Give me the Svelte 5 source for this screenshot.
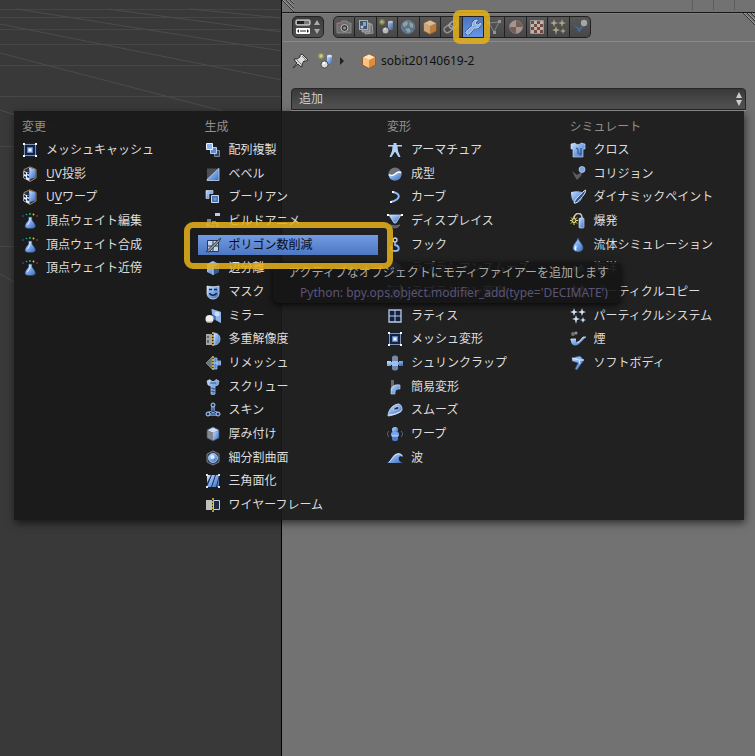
<script>
  let icons = {
    meshcache: '<path d="M1 1h14v14H1z" fill="#15233f"/><path d="M3 2.500h10M3 13.500h10M2.500 3v10M13.500 3v10" stroke="#7f93b5"/><path d="M5.500 5.500h5v5h-5z" fill="#a9c6ef" stroke="#5c84c4"/><path d="M7 7h2v2H7z" fill="#fff"/><path d="M1 1h2v2H1zM13 1h2v2h-2zM1 13h2v2H1zM13 13h2v2h-2z" fill="#fff"/>',
    uv: '<path d="M8 .8l6 2.700v8.500l-6 3.500-6-3.500V3.500z" fill="#22324e" stroke="#a9824f"/><path d="M7 1.500l6.500 2v8L8 13z" fill="url(#blue)"/><path d="M1.500 5l6 2v8l-6-3z" fill="#e8f0fc"/><path d="M2 6l2 .7v2L2 8zM5 9.300l2 .7v2l-2-.7zM2 10l2 .8v2l-2-.8zM5 6.500l2 .6v1.500l-2-.6z" fill="#1b3158"/>',
    weight: '<g><circle cx="1" cy="3" r=".8" fill="#2c61d8"/><circle cx="4.500" cy="1.500" r=".8" fill="#25b7a0"/><circle cx="8" cy="1" r=".9" fill="#37c63b"/><circle cx="11.500" cy="1.500" r=".9" fill="#ead23a"/><circle cx="15" cy="3" r=".8" fill="#e03b2b"/></g><path d="M6.500 4h3.500v3c1 1.500 4 4.500 3.300 7-.8 2-9.300 2-10.100 0C2.500 11.500 5.500 8.500 6.500 7z" fill="url(#blue)" stroke="#23406f" stroke-width=".6"/><path d="M8 5v3l-2.500 4" stroke="#e4f0ff" fill="none"/>',
    array: '<path d="M9.500 8.500h5v6h-5z" fill="#36435d" stroke="#7e8799"/><path d="M5.500 5.500h6v6h-6z" fill="#5e8bd0" stroke="#b7cdf0"/><path d="M1.500 1.500h6v6h-6z" fill="#8cb4ee" stroke="#e6f0ff"/>',
    bevel: '<path d="M2 2.500h12v12H2z" fill="#4b4e54"/><path d="M14 2.500v12H2v-1z" fill="url(#blue)"/><path d="M2 13.500L13.500 2.500H14v12H2z" fill="none" stroke="#bcd4f5" stroke-width=".8"/>',
    boolean: '<path d="M1 1.500h7v3H4v5H1z" fill="url(#blue)" stroke="#dbe9ff" stroke-width=".6"/><path d="M6.500 6.500h7v7h-7z" fill="#4a73b4" stroke="#c4dafa"/><path d="M8.500 8.500h3v3h-3z" fill="#6d97dc"/>',
    build: '<path d="M10 0h5v3h-5z" fill="#b4cff5"/><path d="M2 6h4v3H2zM7 8h4v3H7zM1 10h4v4H1zM6 12h3v2H6zM11 9h3v5h-3z" fill="#6d83a8"/>',
    decimate: '<path d="M2.500 3.500h11v11h-11z" fill="#c2d4ee" stroke="#273957"/><path d="M2 9h12M8 3v12M3 14L14 3" stroke="#273957"/><path d="M1 14.500L13 3l3-2-2 4L4 15z" fill="#8d8f93" stroke="#1c222c" stroke-width=".7"/>',
    edgesplit: '<path d="M8 1l6 3v8l-6 3-6-3V4z" fill="url(#blue)"/><path d="M8 8l6-4v8l-6 3z" fill="#355790"/><path d="M2 4l6 4v7" fill="none" stroke="#c4dafa"/>',
    mask: '<path d="M2 2c4 1 8 1 12 0v7c0 4-3 6-6 6s-6-2-6-6z" fill="url(#blue)" stroke="#e4efff" stroke-width=".7"/><path d="M4 5.500h3M9 5.500h3M4.500 9c1 3 6 3 7 0" stroke="#14284c" fill="none" stroke-width="1.500"/>',
    mirror: '<path d="M6 1l10 3v11l-8-4z" fill="#5178b4"/><path d="M7 1l9 3v11l-5-3V8L7 6z" fill="#8fb4ea"/><circle cx="12" cy="6" r="2.500" fill="#c9dcf8"/><circle cx="4.500" cy="11" r="4" fill="#eee"/><path d="M1 13c2 3 6 2 7 0-2 1-5 1-7 0" fill="#888"/>',
    multires: '<path d="M1 3h6v11H1z" fill="#a7a7a7"/><path d="M2 5h2v2H2zM2 9h2v3H2z" fill="#656565"/><path d="M9 2c8 0 8 12 0 12z" fill="url(#blue)" stroke="#d5e5fd" stroke-width=".6"/><path d="M8 1v15" stroke="#e9c733" stroke-width="1.500" stroke-dasharray="2 1"/>',
    remesh: '<path d="M7 2v12L1 8z" fill="#6d7178" stroke="#ababab" stroke-width=".6"/><path d="M9 3h3v3h4v4h-4v4H9z" fill="#5187dc" stroke="#b8d2f8" stroke-width=".7"/><path d="M9 8h7M12 6v4" stroke="#c9defc" stroke-width=".7"/><path d="M8 1v15" stroke="#e9c733" stroke-width="1.500" stroke-dasharray="2 1"/>',
    screw: '<path d="M2 2l3-1.500 2 2h2l2-2 3 1.500-1 4-3 1v8l-2 1-2-1V7L3 6z" fill="url(#blue)" stroke="#d5e5fd" stroke-width=".6"/><path d="M6 9l4 1M6 12l4 1M5 4h6" stroke="#315387"/>',
    skin: '<path d="M8 4v5L3.500 12h9L8 9" stroke="#7fa8e6" stroke-width="3.500" stroke-linejoin="round" fill="none"/><path d="M8 3v6l-5 3h10L8 9" stroke="#162b50" fill="none"/><g fill="#1d3768" stroke="#b6d0f7"><circle cx="8" cy="3" r="2"/><circle cx="3" cy="12" r="2"/><circle cx="13" cy="12" r="2"/></g>',
    solidify: '<path d="M2 4l6-3 6 3-6 3z" fill="#cfdef4"/><path d="M2 4l6 3v8l-6-3z" fill="#85898f"/><path d="M8 7l6-3v8l-6 3z" fill="url(#blue)"/><path d="M2 4l6-3 6 3v8l-6 3-6-3z" fill="none" stroke="#3a4a66" stroke-width=".7"/>',
    subsurf: '<path d="M8 1l6 3v8l-6 3-6-3V4z" fill="#31394a" stroke="#777d89"/><circle cx="8" cy="8" r="4.500" fill="url(#blue)" stroke="#9dbff2"/><circle cx="7.500" cy="7" r="2" fill="#e1eeff"/>',
    triangulate: '<path d="M2 2h12v12H2z" fill="#1b2e52"/><path d="M2 2h4L2 10zM7 2h3L6 14H2zM11 2h3L11 14H7zM14 5v9h-2z" fill="url(#blue)"/><path d="M1 1h2v2H1zM13 1h2v2h-2zM1 13h2v2H1zM13 13h2v2h-2z" fill="#d9e8ff"/>',
    wireframe: '<path d="M1 3h6v10H1z" fill="#bfbfbf"/><path d="M8.500 3.500h6v9h-6z" fill="#1d2a41" stroke="#bad0f2"/><path d="M8 1v15" stroke="#e9c733" stroke-width="1.500" stroke-dasharray="2 1"/>',
    armature: '<path d="M1 3h5.500V1h3v2H15v1.500h-4.500l.5 4.500 2.500 6h-2L8.300 10h-.6L4.500 15h-2L5 9l.5-4.500H1z" fill="#b4d0f6"/>',
    cast: '<circle cx="8" cy="8" r="6.500" fill="#6f7379"/><path d="M1.500 8c2 1.500 3.500 2 6 0s4-3 7-2c.5 5-2 8.500-6.500 8.500S1.500 11 1.500 8z" fill="url(#blue)"/><path d="M2 8.500c2 1.500 3.500 1.500 6-.5s4-2.500 6-1.500" stroke="#fff" fill="none" stroke-width="1.500"/>',
    curve: '<path d="M6 3c8 2 8 7-2 10" stroke="#93b8ef" stroke-width="2" fill="none"/><path d="M5 2h2v2H5zM3 12h2v2H3z" fill="#f3f8ff"/>',
    displace: '<path d="M2 2h12l-5 8H7z" fill="url(#blue)" stroke="#d8e7ff" stroke-width=".7"/><path d="M3 12l5 1 5-1-2 2-3 1-3-1z" stroke="#676b73" fill="#555"/><path d="M0 1h2v2H0zM14 1h2v2h-2z" fill="#fff"/>',
    hook: '<circle cx="8" cy="3" r="2" fill="none" stroke="#c5daf8" stroke-width="1.300"/><path d="M8 5v3c5 1 5 6 0 6-3 0-5-1-4-4l1 1" fill="none" stroke="#8bb3ef" stroke-width="1.800"/>',
    laplacian: '<circle cx="8" cy="8" r="6" fill="url(#blue)"/><path d="M3 9c3-4 6-4 9 0" stroke="#dce9fc" fill="none"/>',
    lattice: '<path d="M2 2h12v12H2z" fill="#13213d" stroke="#b8cbed" stroke-width="1.300"/><path d="M8 2v12M2 8h12" stroke="#b8cbed"/>',
    shrinkwrap: '<path d="M0 6h4v1h8V6h4v5h-4v-1H4v1H0z" fill="url(#blue)"/><path d="M5 2c1-2 5-2 6 0v12c-1 2-5 2-6 0z" fill="#6e86ab"/><path d="M5 6h6v5H5z" fill="#9bc0f5"/><path d="M6 2h4v3H6z" fill="#888"/>',
    simple: '<path d="M4 1h3v13H4z" fill="#66686b"/><path d="M4 15V10c1-3 4-5 9-4v4c-4 0-5 1-5 5z" fill="url(#blue)" stroke="#c6dcfa" stroke-width=".6"/>',
    smooth: '<path d="M1 14c0-4 3-11 10-12 3 0 4 3 4 6 0 2-7 5-14 6z" fill="url(#blue)" stroke="#d9e8ff" stroke-width=".8"/><path d="M6 8c2-4 6-4 6-2 0 1-2 2-6 2z" fill="#182641" stroke="#dceaff" stroke-width=".7"/><path d="M2 13c4 0 9-2 12-4" stroke="#dceaff"/>',
    warp: '<circle cx="8" cy="4" r="3" fill="url(#blue)"/><rect x="4" y="6" width="8" height="5" rx="2" fill="#79a7ef"/><rect x="5" y="10" width="6" height="5" rx="2" fill="#4d7dce"/><path d="M5 10h6" stroke="#d0e2fb"/><path d="M2 5c-2 2-2 4 0 6M14 5c2 2 2 4 0 6" fill="none" stroke="#54729e"/>',
    wave: '<path d="M0 13C4 12 5 4 11 3c3 0 5 2 5 4-3-2-5 0-4 3 1 2 2 2 4 3z" fill="url(#blue)"/><path d="M2 12C5 10 6 5 11 4c2 0 4 1 4 2" stroke="#d7e6fc" fill="none"/>',
    cloth: '<path d="M1 2l4-1c1 2 5 2 6 0l4 1v5h-2v8H3V7H1z" fill="url(#blue)" stroke="#d6e6fd" stroke-width=".6"/><path d="M6 6l2 1v5M11 6v6H9" stroke="#1e4580" fill="none"/>',
    collision: '<path d="M2 5l5 4 6-4-2 5-4 4-2-3z" fill="#5b5d61"/><circle cx="12" cy="3.500" r="3" fill="#7ea6e6" stroke="#c9dcfa" stroke-width=".7"/>',
    paint: '<path d="M1 3c5-1 7-1 11 0v5c0 4-4 6-6 6-4-1-5-6-5-11z" fill="url(#blue)"/><path d="M4 14c1-4 6-8 10-12l2-1c0 3-6 10-10 13z" fill="#2a528f" stroke="#e3efff"/>',
    explode: '<path d="M4 5c1-6 8-6 8 0" fill="none" stroke="#c7c7c7" stroke-width="1.500"/><rect x="9" y="5" width="5" height="10" rx="1" fill="url(#blue)" stroke="#dbe8fd" stroke-width=".6"/><path d="M4 3v9M0 7.500h8M1 4.500l6 6M7 4.500l-6 6" stroke="#e2d46a"/><circle cx="4" cy="7.500" r="2" fill="#4b471d" stroke="#efe798"/>',
    fluid: '<path d="M8 1c1 4 5 6 5 10 0 5-10 5-10 0 0-4 4-6 5-10z" fill="url(#blue)" stroke="#365e9b" stroke-width=".7"/><path d="M6 9c-1 2-1 3 0 4" stroke="#fff" fill="none" stroke-width="1.500"/>',
    ocean: '<path d="M1 10l4-5 3 3 3-4 4 6-7 3z" fill="url(#blue)"/>',
    particles: '<path d="M4 0l1 3 3 1-3 1-1 3-1-3-3-1 3-1zM12 0l1 3 3 1-3 1-1 3-1-3-3-1 3-1zM6 7l1 3 3 1-3 1-1 4-1-4-3-1 3-1zM13 9l.8 2.200L16 12l-2.200.8L13 15l-.8-2.200L10 12l2.200-.8z" fill="#cfe2f8"/>',
    smoke: '<circle cx="3" cy="3" r="2" fill="#6d7178"/><circle cx="6" cy="2" r="1.500" fill="#8e9299"/><path d="M0 8h6v3l3-1 4-4h3l-6 6c-3 4-9 3-9-2z" fill="url(#blue)"/><path d="M1 8h5M7 12l3-2 3-4h3" stroke="#e0ecff" stroke-width=".8"/>',
    softbody: '<path d="M2 3l8-2 4 4-3 4-4 6-2-1 3-6-6-2z" fill="url(#blue)" stroke="#2f5085" stroke-width=".6"/><path d="M2 3l7 2 5 0M9 5l1 4" fill="none" stroke="#dcebff"/>',

    camera: '<path d="M1 4h4l1-2h5l1 2h3v10H1z" fill="#777" stroke="#aaa" stroke-width=".8"/><circle cx="8.500" cy="9" r="3.500" fill="#333" stroke="#ddd"/><circle cx="8.500" cy="9" r="1.500" fill="#aaa"/><path d="M2 5h2v1H2z" fill="#c84630"/>',
    layers: '<path d="M7 6l7-1 1 9-8 1z" fill="#777" stroke="#bbb"/><path d="M4 4h8v9H4z" fill="#999" stroke="#ddd" stroke-width=".7"/><path d="M1 1h9v10H1z" fill="#ccc"/><path d="M2 2h7v8H2z" fill="#365684"/><path d="M5 3h3v4H5z" fill="#9abcec"/><circle cx="4" cy="8" r="1.500" fill="#eee"/>',
    scene: '<circle cx="3" cy="3" r="3" fill="#a39f55" opacity=".7"/><path d="M3 1v4M1 3h4" stroke="#f0eb9a" stroke-width=".8"/><path d="M9 3h5v8H9z" fill="url(#blue)"/><ellipse cx="11.500" cy="3" rx="2.500" ry="1.300" fill="#d4e5ff"/><circle cx="6.500" cy="11.500" r="3.500" fill="#ddd" stroke="#333" stroke-width=".8"/><circle cx="6" cy="10" r="1.300" fill="#fff"/>',
    world: '<circle cx="8" cy="8" r="6.500" fill="#5a7fae" stroke="#99adbd" stroke-width=".6"/><path d="M3 4l4-2 1 3-3 3-2-1zM9 3l4 2v4l-3-1zM5 10l4-1 2 3-3 2z" fill="#a4bdb5"/>',
    cube: '<path d="M1.500 4L8 1l6.500 3v8L8 15.500 1.500 12z" fill="#e08c3a"/><path d="M2 4l6-3 6 3-6 3z" fill="#ffe3bd"/><path d="M2 4l6 3v8l-6-3z" fill="#f8c286"/><path d="M1.500 4L8 1l6.500 3v8L8 15.500 1.500 12z" fill="none" stroke="#815124" stroke-width=".7"/>',
    constraint: '<rect x="1" y="7" width="9" height="6" rx="3" transform="rotate(-35 5 10)" fill="none" stroke="#aaa" stroke-width="1.500"/><rect x="6" y="3" width="9" height="6" rx="3" transform="rotate(-35 10 6)" fill="none" stroke="#c0c0c0" stroke-width="1.500"/>',
    wrench: '<path d="M1 12.500L7.500 7C6.500 3.500 9 .8 12.500 1L10.500 3.500l.5 2 2 .5L15.500 4c.5 3.500-2.500 6-6 5L4 15c-2 1.300-4-.8-3-2.500z" fill="#a8c8fa" stroke="#14284c" stroke-width="1.600" stroke-linejoin="round"/><path d="M1 12.500L7.500 7C6.500 3.500 9 .8 12.500 1L10.500 3.500l.5 2 2 .5L15.500 4c.5 3.500-2.500 6-6 5L4 15c-2 1.300-4-.8-3-2.500z" fill="#86aff0" stroke="#eef5ff" stroke-width=".8"/>',
    data: '<path d="M3 4l10-1-5 10z" fill="none" stroke="#999"/><path d="M1 2h3v3H1zM12 1h3v3h-3zM7 12h3v3H7z" fill="#aaa"/>',
    material: '<circle cx="8" cy="8" r="6.500" fill="#82635b" stroke="#b0a09c" stroke-width=".6"/><path d="M8 1.500A6.500 6.500 0 0 0 1.500 8H8zM8 8v6.500A6.500 6.500 0 0 0 14.500 8z" fill="#c1aca6"/>',
    texture: '<path d="M1.500 1.500h13v13h-13z" fill="#e5d5cf" stroke="#aaa"/><path d="M2 2h3v3H2zM8 2h3v3H8zM5 5h3v3H5zM11 5h3v3h-3zM2 8h3v3H2zM8 8h3v3H8zM5 11h3v3H5zM11 11h3v3h-3z" fill="#84483c"/>',
    sparkles: '<path d="M4 0l1 3 3 1-3 1-1 3-1-3-3-1 3-1zM12 0l1 3 3 1-3 1-1 3-1-3-3-1 3-1zM6 7l1 3 3 1-3 1-1 4-1-4-3-1 3-1zM13 9l.8 2.200L16 12l-2.200.8L13 15l-.8-2.200L10 12l2.200-.8z" fill="#c9c49b"/>',
    physics: '<path d="M1 5l6 4 6-4-3 5-3 4-2-4z" fill="#466ca8"/><circle cx="12" cy="4" r="3.200" fill="#bfc2c5"/>',
    pin: '<path d="M9 1l6 6-2 1-2 0-2 3 0 3-2-1-2-2-5 4 4-5-2-2-1-2h3l3-2 0-2z" fill="#ddd" stroke="#222" stroke-width=".9"/><path d="M9 3l4 4M4 7l5 5" stroke="#777"/>'
  }

  let tabs = ['camera', 'layers', 'scene', 'world', 'cube', 'constraint', 'wrench', 'data', 'material', 'texture', 'sparkles', 'physics']
  let activeTab = $state('wrench')
  let selected = $state('decimate')

  let groups = [
    {
      title: '変更',
      items: [
        ['meshcache', 'メッシュキャッシュ'],
        ['uv', '投影', '', 'U', 'V'],
        ['uv', 'ワープ', 'U', 'V', ''],
        ['weight', '頂点ウェイト編集'],
        ['weight', '頂点ウェイト合成'],
        ['weight', '頂点ウェイト近傍']
      ]
    },
    {
      title: '生成',
      items: [
        ['array', '配列複製'],
        ['bevel', 'ベベル'],
        ['boolean', 'ブーリアン'],
        ['build', 'ビルドアニメ'],
        ['decimate', 'ポリゴン数削減'],
        ['edgesplit', '辺分離'],
        ['mask', 'マスク'],
        ['mirror', 'ミラー'],
        ['multires', '多重解像度'],
        ['remesh', 'リメッシュ'],
        ['screw', 'スクリュー'],
        ['skin', 'スキン'],
        ['solidify', '厚み付け'],
        ['subsurf', '細分割曲面'],
        ['triangulate', '三角面化'],
        ['wireframe', 'ワイヤーフレーム']
      ]
    },
    {
      title: '変形',
      items: [
        ['armature', 'アーマチュア'],
        ['cast', '成型'],
        ['curve', 'カーブ'],
        ['displace', 'ディスプレイス'],
        ['hook', 'フック'],
        ['laplacian', 'ラプラシアンスムーズ'],
        ['meshcache', 'ラプラシアン変形'],
        ['lattice', 'ラティス'],
        ['meshcache', 'メッシュ変形'],
        ['shrinkwrap', 'シュリンクラップ'],
        ['simple', '簡易変形'],
        ['smooth', 'スムーズ'],
        ['warp', 'ワープ'],
        ['wave', '波']
      ]
    },
    {
      title: 'シミュレート',
      items: [
        ['cloth', 'クロス'],
        ['collision', 'コリジョン'],
        ['paint', 'ダイナミックペイント'],
        ['explode', '爆発'],
        ['fluid', '流体シミュレーション'],
        ['ocean', '海洋'],
        ['particles', 'パーティクルコピー'],
        ['particles', 'パーティクルシステム'],
        ['smoke', '煙'],
        ['softbody', 'ソフトボディ']
      ]
    }
  ]
</script>

{#snippet icon(name)}
  <svg class="icon" viewBox="0 0 16 16" fill="none" aria-hidden="true">{@html icons[name]}</svg>
{/snippet}

{#snippet grip()}
  <svg class="grip" viewBox="0 0 12 12" aria-hidden="true">
    <path d="M0 0l12 12M4 0l8 8M8 0l4 4" stroke="#333" />
    <path d="M1 0l11 11M5 0l7 7M9 0l3 3" stroke="#aaa" stroke-width=".7" />
  </svg>
{/snippet}

<svg width="0" height="0" class="defs" aria-hidden="true">
  <linearGradient id="blue" x1="0" y1="0" x2="1" y2="1">
    <stop offset="0" stop-color="#cde1fc" />
    <stop offset=".5" stop-color="#7ba7e8" />
    <stop offset="1" stop-color="#3c68b2" />
  </linearGradient>
</svg>

<div class="window">
  <section class="viewport" aria-label="3D View">
    <svg viewBox="0 0 282 756" preserveAspectRatio="xMinYMin slice" fill="none" aria-hidden="true">
      <path stroke="#464646" d="M0 9.500h282M0 17.500h282M0 29.500h282M0 44.500h282M0 65.500h282M0 96.500h282M0 146.500h282M0 246.500h282" />
      <path stroke="#4c4c4c" d="M17 9l265 42M108 9l174 23M190 9l92 9M0 24l282 56M0 53l223 58M0 110l60 20M0 274l60 34" />
      <path stroke="#682528" d="M0 521.500h282" />
    </svg>
  </section>

  <main class="properties">
    <div class="strip">
      {@render grip()}
      <div class="ticks"><i></i><i></i><i></i></div>
    </div>
    <header>
      <button class="editor" aria-label="Editor type">
        <svg viewBox="0 0 28 18" aria-hidden="true">
          <rect x="2" y="2" width="14" height="5" rx="1" fill="#777" stroke="#eee" />
          <path d="M3 3h7v3H3z" fill="#222" />
          <rect x="2" y="10" width="14" height="6" rx="1" fill="#fff" />
          <path d="M3 13l2-2v4zM15 13l-2-2v4zM6 12.500h6v1H6z" fill="#222" />
          <path d="M20 7l3-5 3 5zM20 11l3 5 3-5z" fill="#aaa" />
        </svg>
      </button>
      <div class="tabs">
        {#each tabs as tab}
          <button class="tab" class:active={tab === activeTab} aria-label={tab} onclick={() => activeTab = tab}>
            {@render icon(tab)}
            {#if tab === activeTab}<span class="marker"></span>{/if}
          </button>
        {/each}
      </div>
      {@render grip()}
    </header>
    <div class="context">
      {@render icon('pin')}
      {@render icon('scene')}
      <svg class="arrow" viewBox="0 0 4 8" aria-hidden="true"><path d="M0 0l4 4-4 4z" fill="#222" /></svg>
      {@render icon('cube')}
      <span>sobit20140619-2</span>
    </div>
    <button class="add" aria-haspopup="menu" aria-expanded="true">
      追加
      <svg viewBox="0 0 6 14" aria-hidden="true"><path d="M0 6l3-6 3 6zM0 8l3 6 3-6z" fill="#ccc" /></svg>
    </button>
  </main>

  <div class="menu">
    {#each groups as group}
      <section class="group">
        <h2>{group.title}</h2>
        <ul>
          {#each group.items as [name, label, before, key, after]}
            <li>
              <button class="item" class:selected={name === selected} onclick={() => selected = name}>
                {@render icon(name)}
                <span>{before}{#if key}<u>{key}</u>{/if}{after}{label}</span>
              </button>
              {#if name === 'decimate'}<span class="marker"></span>{/if}
            </li>
          {/each}
        </ul>
      </section>
    {/each}
    <div class="tooltip" role="tooltip">
      <p>アクティブなオブジェクトにモディファイアーを追加します</p>
      <p class="python">Python: bpy.ops.object.modifier_add(type='DECIMATE')</p>
    </div>
  </div>
</div>

<style>
  :global(body) {
    margin: 0;
    background: #727272;
  }
  .defs {
    position: absolute;
  }
  .window {
    position: relative;
    display: flex;
    min-height: 100vh;
    font: 12px/20px "Noto Sans", "Noto Sans CJK JP", sans-serif;
    color: #ddd;
  }
  button {
    font: inherit;
    color: inherit;
    margin: 0;
    padding: 0;
    border: 0;
    background: none;
    box-sizing: border-box;
  }
  .icon {
    display: block;
    flex: none;
    width: 16px;
    height: 16px;
  }

  .viewport {
    flex: 281 1 0;
    position: relative;
    overflow: hidden;
    background: #393939;
    border-right: 1px solid #000;
  }
    .viewport svg {
      position: absolute;
      width: 100%;
      height: 100%;
    }

  .properties {
    flex: 473 1 0;
    background: #727272;
  }
    .grip {
      display: block;
      flex: none;
      width: 12px;
      height: 12px;
    }
    .strip {
      display: flex;
      justify-content: space-between;
      height: 12px;
      border-bottom: 1px solid #161616;
    }
      .ticks {
        display: flex;
        gap: 20px;
        padding-right: 20px;
      }
        .ticks i {
          width: 1px;
          height: 10px;
          background: #5c5c5c;
        }
    header {
      display: flex;
      align-items: center;
      height: 28px;
      padding-left: 10px;
      border-bottom: 1px solid #8a8a8a;
      box-shadow: inset 0 1px #808080;
    }
      header > .grip {
        align-self: flex-start;
        margin-left: auto;
      }
      .editor {
        width: 32px;
        height: 22px;
        margin-right: 9px;
        padding: 1px;
        border: 1px solid #222;
        border-radius: 5px;
        background: linear-gradient(#3c3c3c, #505050);
      }
        .editor svg {
          display: block;
          width: 28px;
          height: 18px;
        }
      .tabs {
        display: flex;
        width: 258px;
        height: 22px;
      }
        .tab {
          flex: 1;
          position: relative;
          display: flex;
          align-items: center;
          justify-content: center;
          border: solid #202020;
          border-width: 1px 1px 1px 0;
          background: linear-gradient(#575757, #474747);
        }
        .tab .icon {
          opacity: .75;
        }
        .tab:first-child {
          border-left-width: 1px;
          border-radius: 5px 0 0 5px;
        }
        .tab:last-child {
          border-radius: 0 5px 5px 0;
        }
        .tab.active {
          background: linear-gradient(#4a74bd, #6596e6);
        }
        .tab.active .icon {
          opacity: 1;
        }
    .marker {
      position: absolute;
      z-index: 3;
      border: 6px solid rgba(226, 174, 28, .88);
      border-radius: 9px;
      pointer-events: none;
    }
    .tab .marker {
      inset: -7px -7px -7px -10px;
      border-radius: 7px;
    }
    .context {
      display: flex;
      align-items: center;
      height: 38px;
      padding-left: 11px;
      color: #111;
    }
      .context .icon + .icon {
        margin-left: 9px;
      }
      .context .arrow {
        width: 4px;
        height: 8px;
        margin: 0 17px 0 6px;
      }
      .context span {
        margin-left: 4px;
      }
    .add {
      display: flex;
      align-items: center;
      justify-content: space-between;
      width: calc(100% - 18px);
      height: 22px;
      margin: 8px 9px 0;
      padding: 0 3px 0 7px;
      border: 1px solid #252525;
      border-radius: 4px 4px 0 0;
      background: linear-gradient(#383838, #545454);
      color: #ccc;
      box-shadow: 0 1px #999;
    }
      .add svg {
        width: 6px;
        height: 14px;
      }

  .menu {
    position: absolute;
    top: 111px;
    left: 14px;
    right: 11px;
    z-index: 1;
    display: grid;
    grid-template-columns: repeat(4, 1fr);
    padding: 4px 0 3px;
    box-sizing: border-box;
    background: rgba(24, 24, 24, .9);
    box-shadow: 1px 3px 8px rgba(0, 0, 0, .6);
  }
    h2 {
      margin: 0;
      padding-left: 8px;
      font-size: 12px;
      line-height: 23px;
      font-weight: normal;
      color: #909090;
    }
    ul {
      display: grid;
      grid-template-rows: repeat(16, 1fr);
      height: 379px;
      margin: 0;
      padding: 0;
      list-style: none;
    }
      li {
        position: relative;
        display: flex;
        align-items: center;
        min-height: 0;
      }
        .item {
          flex: 1;
          display: flex;
          align-items: center;
          gap: 8px;
          height: 20px;
          margin: 0 1px;
          padding-left: 7px;
          white-space: nowrap;
        }
        .item.selected {
          background: linear-gradient(#719be2, #4e77c2);
          color: #080c14;
        }
        u {
          text-underline-offset: 2px;
        }
        li .marker {
          inset: -11px -14px -13px -13px;
        }
    .tooltip {
      position: absolute;
      top: 151px;
      left: 259px;
      z-index: 2;
      padding: 1px 12px 0 15px;
      border-radius: 6px;
      background: rgba(22, 22, 22, .92);
      box-shadow: 0 2px 6px rgba(0, 0, 0, .8);
      color: #aaa;
      white-space: nowrap;
    }
      p {
        margin: 0;
      }
      .python {
        padding-left: 12px;
        color: #5b5478;
      }
</style>
